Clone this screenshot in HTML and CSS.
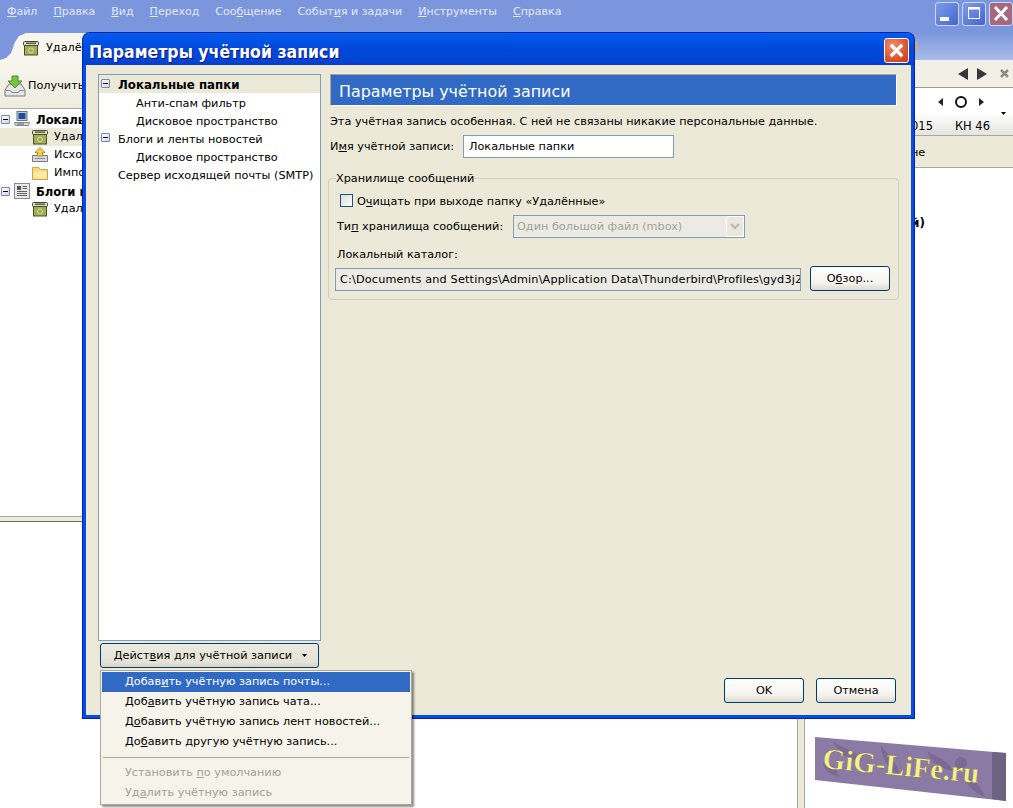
FILE: index.html
```html
<!DOCTYPE html>
<html lang="ru">
<head>
<meta charset="utf-8">
<title>Параметры учётной записи</title>
<link rel="stylesheet" href="styles.css">
</head>
<body>
<svg class="defs" width="0" height="0" aria-hidden="true">
  <symbol id="bin" viewBox="0 0 16 16">
    <rect x=".5" y="1.500" width="15" height="4" rx="1" fill="#d8dccb" stroke="#3e4a2a"/>
    <rect x="1.500" y="5.500" width="13" height="9.500" fill="#a3ad55" stroke="#46502a"/>
    <rect x="3" y="2.500" width="10" height="1.500" fill="#5a6440"/>
    <circle cx="8" cy="10.500" r="2.500" fill="none" stroke="#d3dba0"/>
  </symbol>
  <symbol id="outbox" viewBox="0 0 16 16">
    <path d="M.5 8.500h15v6H.5z" fill="#d9d9dc" stroke="#767a86"/>
    <path d="M3 11h10v1H3z" fill="#8a8e98"/>
    <path d="M8 .5 13 5.500h-2.500V9h-5V5.500H3z" fill="#f6cf4a" stroke="#b58a20"/>
  </symbol>
  <symbol id="folder" viewBox="0 0 16 16">
    <path d="M.5 14.500v-12h6l2 2h7v10z" fill="#f9d97a" stroke="#c9a646"/>
    <path d="M1.500 6.500h13v7h-13z" fill="#fde9a8"/>
  </symbol>
  <symbol id="computer" viewBox="0 0 16 16">
    <rect x="3" y=".5" width="10" height="9" fill="#c4cad4" stroke="#6b7280"/>
    <rect x="4.500" y="2" width="7" height="6" fill="#1c4f9f"/>
    <path d="M.5 11.500h15l-1 3h-13z" fill="#d9dade" stroke="#868a94"/>
    <path d="M3 13h7" stroke="#5d616b"/>
  </symbol>
  <symbol id="news" viewBox="0 0 16 16">
    <rect x=".5" y=".5" width="15" height="15" fill="#eceae4" stroke="#87888c"/>
    <rect x="3" y="3" width="4" height="4" fill="#53565c"/>
    <path d="M8.500 3.500h4.500M8.500 5.500h4.500M3 8.500h10M3 10.500h10M3 12.500h10" stroke="#5c5f66"/>
  </symbol>
  <symbol id="getmail" viewBox="0 0 22 22">
    <path d="M1 15 5 9h12l4 6v6H1z" fill="#e6e6e6" stroke="#7a7a7a"/>
    <path d="M1.500 15.500h5l1 2h7l1-2h5" fill="none" stroke="#8a8a8a"/>
    <path d="M8 1h6v5h4l-7 7-7-7h4z" fill="#7cc143" stroke="#4a8f2a"/>
  </symbol>
</svg>

<div class="main">
  <header class="chrome">
    <nav class="menubar">
      <span><u>Ф</u>айл</span><span><u>П</u>равка</span><span><u>В</u>ид</span><span><u>П</u>ереход</span><span>Соо<u>б</u>щение</span><span>Событ<u>и</u>я и задачи</span><span><u>И</u>нструменты</span><span><u>С</u>правка</span>
    </nav>
    <div class="caption-buttons">
      <span class="cap-btn"><svg viewBox="0 0 22 22"><rect x="4" y="14" width="9" height="4" fill="#fff"/></svg></span>
      <span class="cap-btn"><svg viewBox="0 0 22 22"><rect x="5.500" y="4.500" width="11" height="11" fill="none" stroke="#fff"/><rect x="5" y="4" width="12" height="2.500" fill="#fff"/></svg></span>
      <span class="cap-btn cap-close"><svg viewBox="0 0 22 22"><path d="M5 4 17 17M17 4 5 17" stroke="#fff" stroke-width="3"/></svg></span>
    </div>
    <div class="tab"><svg class="ico16"><use href="#bin"/></svg><span>Удалё</span></div>
    <i class="tab-stub"></i>
  </header>
  <div class="content">
    <div class="left-pane">
      <div class="toolbar">
        <div class="getmail"><svg class="ico22"><use href="#getmail"/></svg><span>Получить</span></div>
      </div>
      <ul class="folders">
        <li class="folder-root"><i class="exp"></i><svg class="ico16"><use href="#computer"/></svg><b>Локальные</b></li>
        <li class="folder-sel"><svg class="ico16"><use href="#bin"/></svg><span>Удалённые</span></li>
        <li class="folder-sub"><svg class="ico16"><use href="#outbox"/></svg><span>Исходящие</span></li>
        <li class="folder-sub"><svg class="ico16"><use href="#folder"/></svg><span>Импорт</span></li>
        <li class="folder-root"><i class="exp"></i><svg class="ico16"><use href="#news"/></svg><b>Блоги и ленты</b></li>
        <li class="folder-sub"><svg class="ico16"><use href="#bin"/></svg><span>Удалённые</span></li>
      </ul>
      <div class="h-split"></div>
    </div>
    <aside class="today">
      <div class="pager">
        <svg viewBox="0 0 10 12" class="arrow"><path d="M10 0v12L0 6z"/></svg>
        <svg viewBox="0 0 10 12" class="arrow"><path d="M0 0v12l10-6z"/></svg>
        <svg viewBox="0 0 9 9" class="arrow-x"><path d="M1 1 8 8M8 1 1 8" stroke="#8c8c8c" stroke-width="2.500"/></svg>
      </div>
      <div class="cal-nav">
        <svg viewBox="0 0 5 8" class="tri"><path d="M5 0v8L0 4z"/></svg>
        <i class="ring"></i>
        <svg viewBox="0 0 5 8" class="tri"><path d="M0 0v8l5-4z"/></svg>
        <svg viewBox="0 0 5 3" class="caret cal-caret"><path d="M0 0h5L2.500 3z"/></svg>
      </div>
      <div class="cal-week"><span>015</span><span>КН 46</span></div>
      <div class="cal-line"><span>не</span></div>
      <div class="cal-body"><b>й)</b></div>
    </aside>
  </div>
</div>

<section class="dialog">
  <div class="dlg-title">
    <h1>Параметры учётной записи</h1>
    <span class="dlg-close"><svg viewBox="0 0 24 24"><path d="M6 6 18 18M18 6 6 18" stroke="#fff" stroke-width="3.400"/></svg></span>
  </div>
  <div class="dlg-body">
    <div class="dlg-left">
      <ul class="acct-tree">
        <li class="row row-sel"><i class="exp"></i><b>Локальные папки</b></li>
        <li class="row row-sub">Анти-спам фильтр</li>
        <li class="row row-sub">Дисковое пространство</li>
        <li class="row"><i class="exp"></i>Блоги и ленты новостей</li>
        <li class="row row-sub">Дисковое пространство</li>
        <li class="row">Сервер исходящей почты (SMTP)</li>
      </ul>
      <button class="btn btn-actions">Дейст<u>в</u>ия для учётной записи<svg viewBox="0 0 5 3" class="caret"><path d="M0 0h5L2.500 3z"/></svg></button>
    </div>
    <div class="dlg-right">
      <div class="pane-head">Параметры учётной записи</div>
      <p class="note">Эта учётная запись особенная. С ней не связаны никакие персональные данные.</p>
      <div class="name-row"><label>И<u>м</u>я учётной записи:</label><div class="field name-field">Локальные папки</div></div>
      <fieldset class="store">
        <legend>Хранилище сообщений</legend>
        <div class="check-row"><i class="check"></i><span>О<u>ч</u>ищать при выходе папку «Удалённые»</span></div>
        <div class="type-row"><label>Ти<u>п</u> хранилища сообщений:</label>
          <div class="select"><span>Один большой файл (mbox)</span><i class="sel-btn"><svg viewBox="0 0 10 7"><path d="M1 1 5 5 9 1" fill="none" stroke="#b9b8ab" stroke-width="2"/></svg></i></div>
        </div>
        <div class="dir-label">Локальный каталог:</div>
        <div class="dir-row"><div class="field dir-field">C:\Documents and Settings\Admin\Application Data\Thunderbird\Profiles\gyd3j2</div><button class="btn btn-browse">О<u>б</u>зор...</button></div>
      </fieldset>
      <div class="dlg-actions"><button class="btn btn-ok">OK</button><button class="btn btn-ok">Отмена</button></div>
    </div>
  </div>
</section>

<div class="menu">
  <div class="mi mi-hot">Добав<u>и</u>ть учётную запись почты...</div>
  <div class="mi">Доб<u>а</u>вить учётную запись чата...</div>
  <div class="mi">Д<u>о</u>бавить учётную запись лент новостей...</div>
  <div class="mi">До<u>б</u>авить другую учётную запись...</div>
  <div class="mi-sep"></div>
  <div class="mi mi-off">Установить <u>п</u>о умолчанию</div>
  <div class="mi mi-off">Уд<u>а</u>лить учётную запись</div>
</div>

<div class="v-split"></div>

<svg class="watermark" viewBox="0 0 191 64" aria-label="GiG-LiFe.ru">
  <path d="M0 0 191 16V64L0 43z" fill="#8c7aa6"/>
  <path d="M177 15 191 16V64L177 62z" fill="#6d6280"/>
  <path d="M18 4c10 8 22 8 30 20-12 0-24-6-30-20zM66 8c6 10 16 14 18 30-10-6-18-16-18-30zM112 14c10 6 20 8 26 20-12-2-22-8-26-20zM146 20a6 6 0 1 0 .1 0zM8 26c8 0 14 6 16 14-8-2-14-6-16-14zM150 40c10 2 16 10 20 20-10-4-18-10-20-20z" fill="#7b6a96"/>
  <text class="wm-text" x="7" y="31" transform="rotate(5.500 7 31)">GiG-LiFe.ru</text>
</svg>
</body>
</html>
```

FILE: styles.css
```css
* { box-sizing: border-box; }
html, body { margin: 0; padding: 0; height: 100%; }
body {
  width: 1013px; height: 808px; overflow: hidden; position: relative;
  font: 11.25px "DejaVu Sans", Verdana, sans-serif; color: #000; background: #fff;
}
.defs { position: absolute; }
ul { list-style: none; margin: 0; padding: 0; }
.ico16 { width: 16px; height: 16px; flex: none; display: block; }
.ico22 { width: 22px; height: 22px; flex: none; display: block; }

.main { height: 808px; display: flex; flex-direction: column; }
.chrome {
  height: 60px; position: relative; flex: none;
  background: linear-gradient(transparent 32px, #a9bbea 60px) right top / 98px 60px no-repeat, #7b96dd;
}
.menubar { display: flex; gap: 16px; padding: 5px 0 0 7px; color: #e3e9f9; line-height: 14px; font-size: 11px; }
.caption-buttons { position: absolute; top: 2px; right: 0; display: flex; gap: 3px; }
.cap-btn { width: 24px; height: 24px; border: 1px solid #cdd8f6; border-radius: 3px; background: linear-gradient(135deg, #7f9ce8, #4266d2); }
.cap-btn svg { display: block; width: 22px; height: 22px; }
.cap-close { background: #a8677f; }
.tab {
  position: absolute; left: 0; top: 33px; width: 100px; height: 27px; padding: 7px 0 0 23px;
  background: #f7f6ee;
  clip-path: polygon(26px 0, 100% 0, 100% 100%, 0 100%, 0 27px, 6px 25px, 11px 20px, 15px 9px, 19px 3px);
  display: flex; gap: 7px; align-items: flex-start; line-height: 16px;
}
.tab-stub { position: absolute; left: 915px; top: 41px; width: 2px; height: 11px; background: #d9a77c; }
.content { flex: 1; display: flex; min-height: 0; }
.left-pane { flex: 1; display: flex; flex-direction: column; }
.toolbar {
  height: 49px; flex: none; padding: 15px 0 0 4px; background: linear-gradient(#f7f6ee, #efecdf);
  border-bottom: 1px solid #aca899; display: flex;
}
.getmail { display: flex; gap: 2px; align-items: flex-start; line-height: 16px; }
.getmail span { margin-top: 3px; }
.folders { height: 407px; padding-top: 1px; flex: none; }
.folders li { height: 18px; display: flex; align-items: center; line-height: 18px; white-space: nowrap; }
.folder-root { padding-left: 1px; gap: 4px; }
.folder-root b { font-size: 11.600px; margin: 1px 0 0 2px; }
.folder-sel, .folder-sub { padding-left: 32px; gap: 6px; }
.folder-sel { background: #ece9d8; }
.h-split { height: 6px; flex: none; background: #ece9d8; border-top: 1px solid #aca899; border-bottom: 1px solid #716f64; }
.today { width: 216px; flex: none; position: relative; }
.pager { height: 28px; display: flex; gap: 9px; justify-content: flex-end; align-items: center; padding: 0 4px 0 0; background: #f2f0e6; border-bottom: 1px solid #9c9a8e; }
.arrow { width: 10px; height: 12px; fill: #33363d; }
.arrow-x { width: 9px; height: 9px; margin-left: 4px; }
.cal-nav { height: 25px; display: flex; gap: 12px; justify-content: flex-end; align-items: center; padding: 2px 29px 0 0; position: relative; }
.tri { width: 5px; height: 8px; fill: #222; }
.ring { width: 12px; height: 12px; border: 2px solid #111; border-radius: 50%; }
.cal-week { height: 23px; padding: 5px 23px 0 114px; display: flex; justify-content: space-between; background: linear-gradient(#fff, #e4e3df); border-bottom: 1px solid #aca899; line-height: 16px; font-size: 11.500px; }
.cal-line { height: 32px; padding: 9px 0 0 114px; background: #ece9d8; border-bottom: 1px solid #aca899; line-height: 16px; }
.cal-body { padding: 47px 0 0 114px; font-weight: bold; font-size: 12px; line-height: 16px; }

.dialog {
  position: absolute; left: 83px; top: 33px; width: 831px; height: 685px;
  border: solid #0a4be4; border-width: 0 3px 3px; border-radius: 7px 7px 0 0;
  box-shadow: 0 0 0 1px #0024ae; background: #ece9d8; display: flex; flex-direction: column;
}
.dlg-title {
  margin: 0 -3px; height: 32px; flex: none; padding: 0 5px 0 6px; border-radius: 7px 7px 0 0;
  background: linear-gradient(#0a5be6 0, #0058ee 8%, #0049d8 50%, #0046d5 85%, #0a3cc8 100%);
  display: flex; justify-content: space-between; align-items: flex-start;
}
.dlg-title h1 { margin: 8px 0 0; font: bold 17.500px/22px "DejaVu Sans Condensed", "DejaVu Sans", sans-serif; color: #fff; text-shadow: 1px 1px 0 #0f1089; }
.dlg-close { width: 25px; height: 25px; margin-top: 5px; border: 1px solid #fff; border-radius: 3px; background: radial-gradient(circle at 35% 30%, #f08f70, #da4b22 70%, #c53d16); }
.dlg-close svg { display: block; width: 23px; height: 23px; }
.dlg-body { flex: 1; display: flex; padding: 9px 12px 0; gap: 7px; min-height: 0; }
.dlg-left { width: 223px; flex: none; display: flex; flex-direction: column; }
.acct-tree { height: 567px; flex: none; background: #fff; border: 1px solid #7f9db9; }
.row { height: 18px; line-height: 21px; padding-left: 19px; position: relative; white-space: nowrap; }
.row .exp { position: absolute; left: 2px; top: 4px; }
.row b { font-size: 11.800px; }
.row-sel { background: #ece9d8; }
.row-sub { padding-left: 37px; }
.exp { display: block; flex: none; width: 9px; height: 9px; border: 1px solid #7b7fb8; background: linear-gradient(135deg, #fff, #d5d4e2); position: relative; border-radius: 1px; }
.exp::after { content: ""; position: absolute; left: 1px; right: 1px; top: 3px; height: 1px; background: #000; }
.btn {
  font: inherit; color: #000; padding: 0; border: 1px solid #003c74; border-radius: 3px;
  background: linear-gradient(#fff, #f4f3ee 70%, #dcd8ce); white-space: nowrap;
}
.btn-actions { margin: 2px 2px 0; height: 25px; width: 219px; background: linear-gradient(#ece9df, #e5e2d6 80%, #d6d3c6); position: relative; padding-right: 13px; }
.caret { width: 5px; height: 3px; fill: #000; position: absolute; }
.btn-actions .caret { right: 11px; top: 10px; }
.cal-caret { right: 7px; top: 24px; }
.dlg-right { flex: 1; min-width: 0; display: flex; flex-direction: column; }
.pane-head { margin: 0 2px; height: 32px; padding-left: 8px; flex: none; background: #316ac5; border: 1px solid; border-color: #a6a397 #fff #fff #a6a397; color: #fff; font-size: 15.900px; line-height: 33px; white-space: nowrap; }
.note { margin: 8px 0 0 2px; line-height: 16px; white-space: nowrap; }
.name-row { display: flex; align-items: center; height: 23px; margin: 5px 0 0 2px; }
.name-row label { width: 133px; flex: none; }
.field { border: 1px solid #7f9db9; background: #fff; line-height: 21px; padding-left: 5px; white-space: nowrap; overflow: hidden; }
.name-field { width: 211px; height: 23px; }
.store { margin: 12px 0 0; padding: 0 8px 0 7px; height: 130px; border: 1px solid #d0d0bf; border-radius: 4px; min-width: 0; }
.store legend { padding: 1px 0 0; line-height: 16px; height: 16px; }
.check-row { display: flex; gap: 4px; margin: 7px 0 0 4px; height: 15px; align-items: center; }
.check-row span { margin-top: 2px; }
.check { width: 13px; height: 13px; border: 1px solid #1c5180; background: linear-gradient(135deg, #dcdcd7, #fff); display: block; flex: none; }
.type-row { display: flex; align-items: center; height: 23px; margin: 7px 0 0 1px; }
.type-row label { width: 176px; flex: none; white-space: nowrap; }
.select { width: 232px; height: 23px; border: 1px solid #7f9db9; background: #ebebe4; color: #a3a295; display: flex; justify-content: space-between; align-items: center; padding-left: 3px; }
.sel-btn { width: 18px; height: 21px; background: #e9e7de; border: 1px solid #fff; display: flex; align-items: center; justify-content: center; }
.sel-btn svg { width: 10px; height: 7px; }
.dir-label { margin: 9px 0 0 1px; line-height: 16px; }
.dir-row { display: flex; justify-content: space-between; align-items: flex-end; margin: 3px 0 0 -1px; }
.dir-field { width: 466px; height: 23px; background: #ebebe4; padding-left: 4px; letter-spacing: .16px; }
.btn-browse { width: 80px; height: 25px; }
.dlg-actions { margin-top: auto; display: flex; gap: 12px; justify-content: flex-end; padding: 0 3px 12px 0; }
.btn-ok { width: 80px; height: 25px; }

.menu {
  position: absolute; left: 100px; top: 670px; width: 312px; height: 135px; padding: 1px;
  background: #f5f3ea; border: 1px solid #aca899; box-shadow: 2px 2px 2px rgba(0,0,0,.45);
}
.mi { height: 20px; line-height: 20px; padding-left: 23px; white-space: nowrap; }
.mi-hot { background: #316ac5; color: #fff; }
.mi-off { color: #a3a295; }
.mi-sep { height: 1px; margin: 5px 0 5px 1px; background: #aca899; width: 306px; }
.v-split { position: absolute; left: 797px; top: 719px; width: 8px; height: 89px; background: #ece9d8; border: 1px solid #aca899; border-width: 0 1px; }
.watermark { position: absolute; left: 815px; top: 737px; width: 191px; height: 64px; }
.wm-text { font: bold 29px "Liberation Serif", serif; fill: #f4f08c; stroke: #5f5530; stroke-width: .3px; }
```
